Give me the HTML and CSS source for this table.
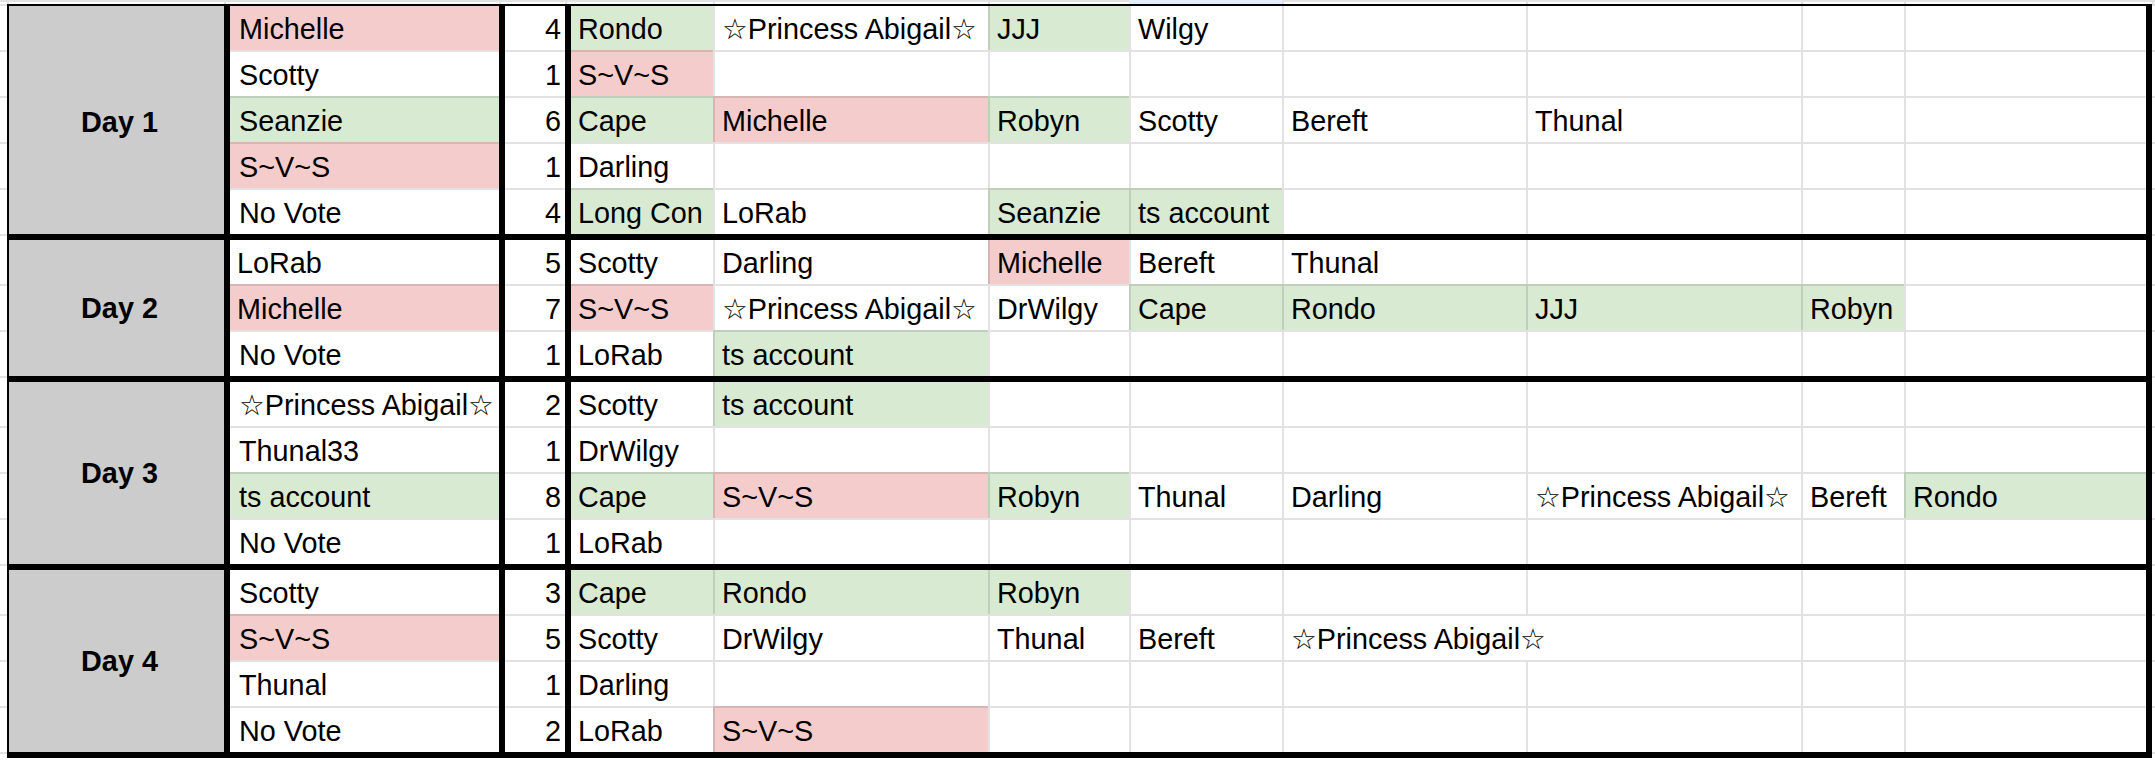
FILE: index.html
```html
<!DOCTYPE html>
<html lang="en">
<head>
<meta charset="utf-8">
<title>Vote tally</title>
<link rel="stylesheet" href="styles.css">
</head>
<body>
<div class="sheet">
  <div class="strip top"><span></span><span></span><span></span><span></span><span></span><span></span><span></span><span class="sel"></span><span></span><span></span><span></span><span></span><span></span></div>

  <div class="sec sec1">
    <div class="c day">Day 1</div>
    <div class="c edge"></div><div class="c nm r">Michelle</div><div class="c ct">4</div><div class="c v v1 g">Rondo</div><div class="c v">☆Princess Abigail☆</div><div class="c v g">JJJ</div><div class="c v">Wilgy</div><div class="c v"></div><div class="c v"></div><div class="c v"></div><div class="c v v8"></div><div class="c edge"></div>
    <div class="c edge"></div><div class="c nm">Scotty</div><div class="c ct">1</div><div class="c v v1 r">S~V~S</div><div class="c v"></div><div class="c v"></div><div class="c v"></div><div class="c v"></div><div class="c v"></div><div class="c v"></div><div class="c v v8"></div><div class="c edge"></div>
    <div class="c edge"></div><div class="c nm g">Seanzie</div><div class="c ct">6</div><div class="c v v1 g">Cape</div><div class="c v r">Michelle</div><div class="c v g">Robyn</div><div class="c v">Scotty</div><div class="c v">Bereft</div><div class="c v">Thunal</div><div class="c v"></div><div class="c v v8"></div><div class="c edge"></div>
    <div class="c edge"></div><div class="c nm r">S~V~S</div><div class="c ct">1</div><div class="c v v1">Darling</div><div class="c v"></div><div class="c v"></div><div class="c v"></div><div class="c v"></div><div class="c v"></div><div class="c v"></div><div class="c v v8"></div><div class="c edge"></div>
    <div class="c edge"></div><div class="c nm">No Vote</div><div class="c ct">4</div><div class="c v v1 g">Long Con</div><div class="c v">LoRab</div><div class="c v g">Seanzie</div><div class="c v g">ts account</div><div class="c v"></div><div class="c v"></div><div class="c v"></div><div class="c v v8"></div><div class="c edge"></div>
  </div>

  <div class="sec sec2">
    <div class="c day">Day 2</div>
    <div class="c edge"></div><div class="c nm tl">LoRab</div><div class="c ct">5</div><div class="c v v1">Scotty</div><div class="c v">Darling</div><div class="c v r">Michelle</div><div class="c v">Bereft</div><div class="c v">Thunal</div><div class="c v"></div><div class="c v"></div><div class="c v v8"></div><div class="c edge"></div>
    <div class="c edge"></div><div class="c nm tl r">Michelle</div><div class="c ct">7</div><div class="c v v1 r">S~V~S</div><div class="c v">☆Princess Abigail☆</div><div class="c v">DrWilgy</div><div class="c v g">Cape</div><div class="c v g">Rondo</div><div class="c v g">JJJ</div><div class="c v g">Robyn</div><div class="c v v8"></div><div class="c edge"></div>
    <div class="c edge"></div><div class="c nm">No Vote</div><div class="c ct">1</div><div class="c v v1">LoRab</div><div class="c v g">ts account</div><div class="c v"></div><div class="c v"></div><div class="c v"></div><div class="c v"></div><div class="c v"></div><div class="c v v8"></div><div class="c edge"></div>
  </div>

  <div class="sec sec3">
    <div class="c day">Day 3</div>
    <div class="c edge"></div><div class="c nm">☆Princess Abigail☆</div><div class="c ct">2</div><div class="c v v1">Scotty</div><div class="c v g">ts account</div><div class="c v"></div><div class="c v"></div><div class="c v"></div><div class="c v"></div><div class="c v"></div><div class="c v v8"></div><div class="c edge"></div>
    <div class="c edge"></div><div class="c nm">Thunal33</div><div class="c ct">1</div><div class="c v v1">DrWilgy</div><div class="c v"></div><div class="c v"></div><div class="c v"></div><div class="c v"></div><div class="c v"></div><div class="c v"></div><div class="c v v8"></div><div class="c edge"></div>
    <div class="c edge"></div><div class="c nm g">ts account</div><div class="c ct">8</div><div class="c v v1 g">Cape</div><div class="c v r">S~V~S</div><div class="c v g">Robyn</div><div class="c v">Thunal</div><div class="c v">Darling</div><div class="c v">☆Princess Abigail☆</div><div class="c v">Bereft</div><div class="c v v8 g">Rondo</div><div class="c edge"></div>
    <div class="c edge"></div><div class="c nm">No Vote</div><div class="c ct">1</div><div class="c v v1">LoRab</div><div class="c v"></div><div class="c v"></div><div class="c v"></div><div class="c v"></div><div class="c v"></div><div class="c v"></div><div class="c v v8"></div><div class="c edge"></div>
  </div>

  <div class="sec sec4">
    <div class="c day">Day 4</div>
    <div class="c edge"></div><div class="c nm">Scotty</div><div class="c ct">3</div><div class="c v v1 g">Cape</div><div class="c v g">Rondo</div><div class="c v g">Robyn</div><div class="c v"></div><div class="c v"></div><div class="c v"></div><div class="c v"></div><div class="c v v8"></div><div class="c edge"></div>
    <div class="c edge"></div><div class="c nm r">S~V~S</div><div class="c ct">5</div><div class="c v v1">Scotty</div><div class="c v">DrWilgy</div><div class="c v">Thunal</div><div class="c v">Bereft</div><div class="c v">☆Princess Abigail☆</div><div class="c v nb"></div><div class="c v"></div><div class="c v v8"></div><div class="c edge"></div>
    <div class="c edge"></div><div class="c nm">Thunal</div><div class="c ct">1</div><div class="c v v1">Darling</div><div class="c v"></div><div class="c v"></div><div class="c v"></div><div class="c v"></div><div class="c v"></div><div class="c v"></div><div class="c v v8"></div><div class="c edge"></div>
    <div class="c edge"></div><div class="c nm">No Vote</div><div class="c ct">2</div><div class="c v v1">LoRab</div><div class="c v r">S~V~S</div><div class="c v"></div><div class="c v"></div><div class="c v"></div><div class="c v"></div><div class="c v"></div><div class="c v v8"></div><div class="c edge"></div>
  </div>

  <div class="strip bottom"><span></span><span></span><span></span><span></span><span></span><span></span><span></span><span></span><span></span><span></span><span></span><span></span><span></span></div>
</div>
</body>
</html>
```

FILE: styles.css
```css
* {
  box-sizing: border-box;
  margin: 0;
  padding: 0;
}

html,
body {
  background: #ffffff;
}

body {
  width: 2155px;
  height: 760px;
  overflow: hidden;
  font-family: "Liberation Sans", Arial, "DejaVu Sans", sans-serif;
  color: #000000;
}

.sheet {
  width: 2155px;
}

.strip,
.sec {
  display: grid;
  grid-template-columns: 7px 217px 275px 66px 148px 275px 141px 153px 244px 275px 103px 248px 3px;
}

/* strips above and below the table */
.top {
  height: 4px;
}

.top > span {
  box-shadow: inset 2px 0 0 #e2e2e2, inset 0 2px 0 #e2e2e2;
}

.top > span:first-child {
  box-shadow: inset 0 2px 0 #e2e2e2;
}

.top > .sel {
  background: #e4edfb;
  box-shadow: none;
}

.bottom {
  height: 8px;
}

.bottom > span {
  box-shadow: inset 0 6px 0 #000000;
}

.bottom > span:first-child,
.bottom > span:last-child {
  box-shadow: inset 0 2px 0 #e2e2e2;
}

/* sections */
.sec1 {
  grid-template-rows: repeat(5, 46px);
}

.sec2 {
  grid-template-rows: 50px 46px 46px;
}

.sec3,
.sec4 {
  grid-template-rows: 50px repeat(3, 46px);
}

/* cells */
.c {
  --tr: 0 0 transparent;
  --tl: 0 0 transparent;
  --tt: 0 0 transparent;
  --gl: inset 2px 0 0 #e2e2e2;
  --gt: inset 0 2px 0 #e2e2e2;
  box-shadow: var(--tr), var(--tl), var(--tt), var(--gl), var(--gt);
  padding-top: 3px;
  font-size: 28.8px;
  line-height: 44px;
  white-space: nowrap;
  min-width: 0;
}

.edge {
  --gl: 0 0 transparent;
}

.r {
  background: #f4cccc;
  --gl: inset 2px 0 0 #d8b5b5;
  --gt: inset 0 2px 0 #d8b5b5;
}

.g {
  background: #d9ead3;
  --gl: inset 2px 0 0 #c0cfbb;
  --gt: inset 0 2px 0 #c0cfbb;
}

.nm {
  padding-left: 15px;
  --tl: inset 6px 0 0 #000000;
}

.nm.tl {
  padding-left: 13px;
}

.ct {
  text-align: right;
  padding-right: 4px;
  --tl: inset 6px 0 0 #000000;
}

.v {
  padding-left: 9px;
}

.v1 {
  padding-left: 13px;
  --tl: inset 6px 0 0 #000000;
}

.v8 {
  --tr: inset -6px 0 0 #000000;
}

.nb {
  --gl: 0 0 transparent;
}

.day {
  grid-row: 1 / -1;
  grid-column: 2;
  background: #cccccc;
  --tl: inset 2px 0 0 #000000;
  --gl: 0 0 transparent;
  display: flex;
  align-items: center;
  justify-content: center;
  padding-left: 8px;
  font-weight: bold;
  line-height: normal;
}

/* first row of each day carries the thick rule */
.sec > .c:nth-child(-n+13) {
  --tt: inset 0 6px 0 #000000;
  padding-top: 7px;
}

.sec1 > .c:nth-child(-n+13) {
  --tt: inset 0 2px 0 #000000;
  padding-top: 3px;
}

.sec1 > .c.day {
  padding-top: 7px;
}

.sec > .c.edge {
  --tt: 0 0 transparent;
}
```
